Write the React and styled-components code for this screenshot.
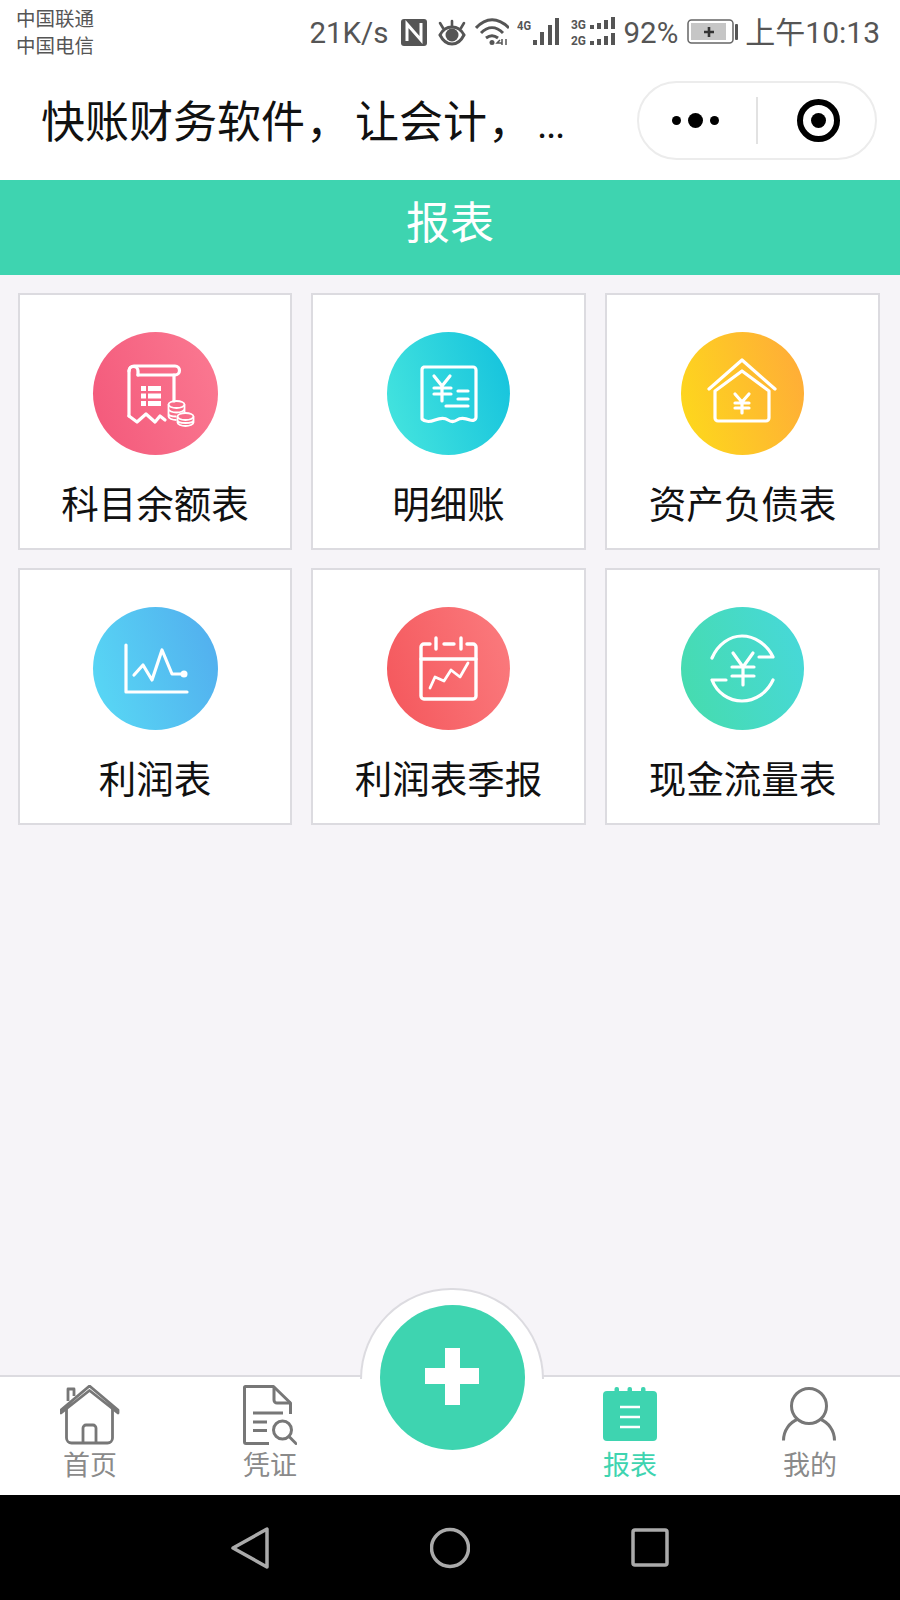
import React from 'react';
import styled, { createGlobalStyle } from 'styled-components';

const TEAL = '#3ed4b0';

const GlobalStyles = createGlobalStyle`
  html, body {
    margin: 0;
    padding: 0;
    background: #000;
  }
  * {
    box-sizing: border-box;
  }
`;

const Page = styled.div`
  width: 900px;
  height: 1600px;
  display: flex;
  flex-direction: column;
  background: #f6f4f8;
  font-family: Roboto, "Noto Sans CJK SC", sans-serif;
  overflow: hidden;
`;

const StatusBar = styled.div`
  height: 60px;
  flex: none;
  background: #fff;
  display: flex;
  justify-content: space-between;
  align-items: center;
  padding: 4px 20px 0 16px;
  color: #555;
`;

const Carriers = styled.div`
  font-size: 19.5px;
  line-height: 27px;
  color: #555;
  margin-top: 2px;
`;

const StatusRight = styled.div`
  display: flex;
  align-items: center;
`;

const StatusText = styled.span`
  font-size: ${props => props.$size || 29.5}px;
  line-height: 34px;
  margin-left: ${props => props.$gap || 0}px;
  margin-top: 2px;
  white-space: nowrap;
`;

const StatusIcon = styled.svg`
  display: block;
  flex: none;
  margin-left: ${props => props.$gap || 0}px;
`;

const NavBar = styled.div`
  height: 120px;
  flex: none;
  background: #fff;
  display: flex;
  justify-content: space-between;
  align-items: center;
  padding: 0 23px 0 41px;
`;

const Title = styled.div`
  font-size: 44px;
  line-height: 60px;
  color: #111;
  white-space: nowrap;
  margin-top: 8px;
`;

const Comma = styled.span`
  margin: 0 5px 0 1px;
`;

const TitleDots = styled.span`
  font-size: 40px;
  letter-spacing: -1.5px;
`;

const Capsule = styled.div`
  width: 240px;
  height: 79px;
  border: 2px solid #ececec;
  border-radius: 40px;
  display: flex;
  align-items: center;
`;

const CapsuleButton = styled.div`
  flex: 1;
  display: flex;
  justify-content: center;
  align-items: center;
  gap: 7px;
  padding: ${props => props.$pad};
`;

const Dot = styled.span`
  width: ${props => props.$size}px;
  height: ${props => props.$size}px;
  border-radius: 50%;
  background: #000;
`;

const CapsuleDivider = styled.div`
  width: 2px;
  height: 47px;
  background: #e2e2e2;
`;

const TargetRing = styled.div`
  width: 43px;
  height: 43px;
  border: 6px solid #000;
  border-radius: 50%;
  display: flex;
  justify-content: center;
  align-items: center;
`;

const Header = styled.div`
  height: 95px;
  flex: none;
  background: ${TEAL};
  color: #fff;
  font-size: 44px;
  line-height: 89px;
  text-align: center;
`;

const Main = styled.div`
  flex: 1;
  padding: 18px 20px 0 18px;
`;

const Grid = styled.div`
  display: grid;
  grid-template-columns: 274px 275px 275px;
  grid-auto-rows: 257px;
  column-gap: 19px;
  row-gap: 18px;
`;

const Card = styled.div`
  background: #fff;
  border: 2px solid #dcdbe0;
  padding-top: 37px;
  display: flex;
  flex-direction: column;
  align-items: center;
`;

const IconCircle = styled.div`
  width: ${props => props.$size}px;
  height: 123px;
  border-radius: 50%;
  background: linear-gradient(72deg, ${props => props.$from}, ${props => props.$to});
  & > svg {
    display: block;
    width: 100%;
    height: 100%;
  }
`;

const CardLabel = styled.div`
  margin-top: 25px;
  font-size: 37.5px;
  line-height: 50px;
  color: #111;
  white-space: nowrap;
`;

const TabBar = styled.div`
  position: relative;
  height: 120px;
  flex: none;
  background: #fff;
  border-top: 2px solid #dcdbe0;
  display: grid;
  grid-template-columns: repeat(5, 180px);
`;

const FabRing = styled.div`
  position: absolute;
  left: 360px;
  top: -89px;
  width: 184px;
  height: 91px;
  background: #fff;
  border: 2px solid #dcdbe0;
  border-bottom: none;
  border-radius: 92px 92px 0 0;
`;

const Fab = styled.div`
  position: absolute;
  left: 380px;
  top: -72px;
  width: 145px;
  height: 145px;
  border-radius: 50%;
  background: ${TEAL};
  &::before, &::after {
    content: '';
    position: absolute;
    background: #fff;
  }
  &::before {
    left: 45px;
    top: 63px;
    width: 54px;
    height: 16px;
  }
  &::after {
    left: 65px;
    top: 43px;
    width: 15px;
    height: 57px;
  }
`;

const Tab = styled.div`
  display: flex;
  flex-direction: column;
  align-items: center;
  padding-top: 8px;
`;

const TabIcon = styled.svg`
  display: block;
  flex: none;
`;

const TabLabel = styled.div`
  margin-top: 5px;
  font-size: 27px;
  line-height: 32px;
  color: ${props => (props.$active ? TEAL : '#8a8a8a')};
`;

const SystemNav = styled.div`
  height: 105px;
  flex: none;
  background: #000;
  display: flex;
  justify-content: center;
  align-items: center;
  gap: 160px;
`;

const stroke = { fill: 'none', stroke: '#fff', strokeWidth: 3.2, strokeLinecap: 'round', strokeLinejoin: 'round' };

function LedgerIcon() {
  return (
    <svg viewBox="0 0 123 123">
      <g {...stroke}>
        <path d="M35 84V39a5 5 0 0 1 5-5h41a4.500 4.500 0 0 1 0 9H44" />
        <path d="M35 39a4.500 4.500 0 0 1 9 0v4" />
        <path d="M80 43v26" />
        <path d="M35 84l8 6 9-8 9 8 5-6 5 4" />
      </g>
      <g fill="#fff">
        <rect x="47" y="54" width="5" height="5" />
        <rect x="54" y="54" width="13" height="5" />
        <rect x="47" y="61.500" width="5" height="5" />
        <rect x="54" y="61.500" width="13" height="5" />
        <rect x="47" y="69" width="5" height="5" />
        <rect x="54" y="69" width="13" height="5" />
      </g>
      <g fill="none" stroke="#fff" strokeWidth="1.800">
        <ellipse cx="82.500" cy="72.500" rx="8" ry="3.500" />
        <path d="M74.500 72.500v12c0 2 4 3.500 8 3.500M74.500 77c0 2 4 3.500 8 3.500s8-1.500 8-3.500M74.500 81.500c0 2 4 3 8 3M90.500 72.500v8" />
        <ellipse cx="91.500" cy="84.500" rx="8" ry="3.500" />
        <path d="M83.500 84.500v6c0 2 4 3.500 8 3.500s8-1.500 8-3.500v-6M83.500 88c0 2 4 3 8 3s8-1 8-3" />
      </g>
    </svg>
  );
}

function ReceiptIcon() {
  return (
    <svg viewBox="0 0 123 123">
      <g {...stroke}>
        <path d="M37 35h49a3 3 0 0 1 3 3v47c0 3-3 4-6 3-5-2-9-3-13 0-3 2-6 2-9 0-4-3-8-2-13 0-5 2-10 2-13-1V38a3 3 0 0 1 2-3z" />
        <path d="M47 44l8 10 8-10M47 56h17M47 62h17M55 54v15" />
        <path d="M71 59h10M71 67h10M59 74h22" />
      </g>
    </svg>
  );
}

function HouseIcon() {
  return (
    <svg viewBox="0 0 123 123">
      <g {...stroke}>
        <path d="M28 57L61 28l33 29" />
        <path d="M34 59l27-20 27 20v27a3 3 0 0 1-3 3H37a3 3 0 0 1-3-3z" />
        <path d="M54 62l7 8 7-8M54 71h14M54 76h14M61 70v11" />
      </g>
    </svg>
  );
}

function ChartIcon() {
  return (
    <svg viewBox="0 0 123 123">
      <g {...stroke}>
        <path d="M32 38v47h61" />
        <path d="M40 68l9-10 9 15 10-30 10 24h12" />
      </g>
      <circle cx="90" cy="67" r="3.500" fill="#fff" />
    </svg>
  );
}

function CalendarIcon() {
  return (
    <svg viewBox="0 0 123 123">
      <g {...stroke} strokeWidth="3.400">
        <path d="M43 37h-6a3 3 0 0 0-3 3v49a3 3 0 0 0 3 3h49a3 3 0 0 0 3-3V40a3 3 0 0 0-3-3h-6" />
        <path d="M49 31v11M74 31v11M57 37h10M34 52h55" />
        <path d="M43 81l5-11 9 4 7-11 9 7 8-14" strokeWidth="2.800" />
      </g>
    </svg>
  );
}

function ExchangeIcon() {
  return (
    <svg viewBox="0 0 123 123">
      <g {...stroke}>
        <path d="M31 51c6-14 18-22 30-22 12 0 25 8 31 21H78" />
        <path d="M92 73c-6 13-18 21-31 21-13 0-25-8-30-21h14" />
        <path d="M52 46l10 14 10-14M51 60h22M51 69h22M62 60v18" />
      </g>
    </svg>
  );
}

const reports = [
  { name: '科目余额表', from: '#f3587a', to: '#fb7a92', size: 125, Icon: LedgerIcon },
  { name: '明细账', from: '#47e6de', to: '#13c1dd', size: 123, Icon: ReceiptIcon },
  { name: '资产负债表', from: '#fddb1a', to: '#ffa93a', size: 123, Icon: HouseIcon },
  { name: '利润表', from: '#58daf5', to: '#52acee', size: 125, Icon: ChartIcon },
  { name: '利润表季报', from: '#f4565b', to: '#fb7c7f', size: 123, Icon: CalendarIcon },
  { name: '现金流量表', from: '#46dcab', to: '#47d8dc', size: 123, Icon: ExchangeIcon },
];

function StatusIcons() {
  return (
    <StatusRight>
      <StatusText>21K/s</StatusText>
      <StatusIcon $gap={12} width="26" height="30" viewBox="402 15 26 30">
        <rect x="402" y="17" width="26" height="27" rx="3" fill="#555" />
        <path d="M408 39V22l14 16V21" fill="none" stroke="#fff" strokeWidth="3" />
      </StatusIcon>
      <StatusIcon $gap={11} width="29" height="30" viewBox="439 15 29 30">
        <path d="M441 33c3-6 7-8 12-8s9 2 12 8c-3 6-7 9-12 9s-9-3-12-9z" fill="none" stroke="#555" strokeWidth="3" />
        <circle cx="453" cy="33" r="6.500" fill="#555" />
        <path d="M441 21l3 5M453 19v5M465 21l-3 5" stroke="#555" strokeWidth="2.600" strokeLinecap="round" />
      </StatusIcon>
      <StatusIcon $gap={8} width="34" height="30" viewBox="476 15 34 30">
        <path d="M477 26c10-11 22-11 33 0M482 31c7-7 15-7 22 0M487 36c4-3 8-3 12 0" fill="none" stroke="#555" strokeWidth="3" />
        <circle cx="493" cy="40.500" r="2.500" fill="#555" />
        <path d="M501 38l-3 3h5M503 37v6M507 37v6" fill="none" stroke="#555" strokeWidth="1.500" />
      </StatusIcon>
      <StatusIcon $gap={8} width="44" height="30" viewBox="518 15 44 30">
        <text x="518" y="28" fontFamily="Roboto" fontSize="13" fontWeight="700" fill="#555" textLength="14" lengthAdjust="spacingAndGlyphs">4G</text>
        <path d="M534 38h4v5h-4zM541 30h4v13h-4zM549 23h4v20h-4zM556 16h4v27h-4z" fill="#555" />
      </StatusIcon>
      <StatusIcon $gap={10} width="46" height="30" viewBox="572 15 46 30">
        <text x="572" y="27" fontFamily="Roboto" fontSize="13" fontWeight="700" fill="#555" textLength="15" lengthAdjust="spacingAndGlyphs">3G</text>
        <text x="572" y="43" fontFamily="Roboto" fontSize="13" fontWeight="700" fill="#555" textLength="15" lengthAdjust="spacingAndGlyphs">2G</text>
        <path d="M591 23h4v4h-4zM598 21h4v6h-4zM605 18h4v9h-4zM612 15h4v12h-4zM591 39h4v4h-4zM598 37h4v6h-4zM605 34h4v9h-4zM612 31h4v12h-4z" fill="#555" />
      </StatusIcon>
      <StatusText $gap={7}>92%</StatusText>
      <StatusIcon $gap={9} width="51" height="30" viewBox="687 15 51 30">
        <rect x="688" y="18" width="45" height="23" rx="3.500" fill="none" stroke="#666" strokeWidth="1.500" />
        <rect x="691" y="21" width="35" height="17" fill="#c6c6c6" />
        <path d="M704 30h10M709 25v10" stroke="#333" strokeWidth="2.600" />
        <rect x="735" y="22" width="3" height="16" rx="1" fill="#555" />
      </StatusIcon>
      <StatusText $gap={7} $size={30}>上午10:13</StatusText>
    </StatusRight>
  );
}

function HomeTabIcon() {
  return (
    <TabIcon width="60" height="60" viewBox="0 0 60 60">
      <g fill="none" stroke="#777" strokeWidth="2.800" strokeLinejoin="round">
        <path d="M1 25L29.500 1 58 25v3L29.500 5.500 1 28z" />
        <path d="M8 16V4h6v7" />
        <path d="M6.500 23v30a5 5 0 0 0 5 5h36a5 5 0 0 0 5-5V23" />
        <path d="M23 58V43a3 3 0 0 1 3-3h7a3 3 0 0 1 3 3v15" />
      </g>
    </TabIcon>
  );
}

function VoucherTabIcon() {
  return (
    <TabIcon width="54" height="60" viewBox="242 1384 54 60">
      <g fill="none" stroke="#777" strokeWidth="3" strokeLinejoin="round">
        <path d="M268 1442.500h-23a1.500 1.500 0 0 1-1.500-1.500v-54.500a1 1 0 0 1 1-1h28l17 16.500v11" />
        <path d="M273 1386v13a3 3 0 0 0 3 3h14" />
        <path d="M252 1412h30M252 1421h14M252 1429.500h14" />
        <circle cx="281.500" cy="1429" r="9" />
        <path d="M288 1435.500l7 7" strokeLinecap="round" />
      </g>
    </TabIcon>
  );
}

function ReportTabIcon() {
  return (
    <TabIcon width="54" height="60" viewBox="603 1385 54 60">
      <rect x="603" y="1391" width="54" height="50" rx="4" fill={TEAL} />
      <rect x="614.500" y="1387" width="4.500" height="8" rx="2" fill={TEAL} />
      <rect x="627.500" y="1387" width="4.500" height="8" rx="2" fill={TEAL} />
      <rect x="641" y="1387" width="4.500" height="8" rx="2" fill={TEAL} />
      <path d="M620 1407h20M620 1417h20M620 1427h20" stroke="#fff" strokeWidth="2.600" />
    </TabIcon>
  );
}

function MineTabIcon() {
  return (
    <TabIcon width="60" height="60" viewBox="780 1384 60 60">
      <g fill="none" stroke="#777" strokeWidth="3">
        <circle cx="809" cy="1405" r="17.500" />
        <path d="M783.500 1439.500c0-10 6-18 14.500-21.500M834.500 1439.500c0-10-6-18-14.500-21.500" />
      </g>
    </TabIcon>
  );
}

export default function App() {
  return (
    <Page>
      <GlobalStyles />
      <StatusBar>
        <Carriers>
          <div>中国联通</div>
          <div>中国电信</div>
        </Carriers>
        <StatusIcons />
      </StatusBar>
      <NavBar>
        <Title>
          快账财务软件<Comma>，</Comma>让会计<Comma>，</Comma><TitleDots>...</TitleDots>
        </Title>
        <Capsule>
          <CapsuleButton $pad="0 4px 0 0">
            <Dot $size={9} />
            <Dot $size={15} />
            <Dot $size={9} />
          </CapsuleButton>
          <CapsuleDivider />
          <CapsuleButton $pad="0 0 0 4px">
            <TargetRing>
              <Dot $size={15} />
            </TargetRing>
          </CapsuleButton>
        </Capsule>
      </NavBar>
      <Header>报表</Header>
      <Main>
        <Grid>
          {reports.map(({ name, from, to, size, Icon }) => (
            <Card key={name}>
              <IconCircle $from={from} $to={to} $size={size}>
                <Icon />
              </IconCircle>
              <CardLabel>{name}</CardLabel>
            </Card>
          ))}
        </Grid>
      </Main>
      <TabBar>
        <FabRing />
        <Fab />
        <Tab>
          <HomeTabIcon />
          <TabLabel>首页</TabLabel>
        </Tab>
        <Tab>
          <VoucherTabIcon />
          <TabLabel>凭证</TabLabel>
        </Tab>
        <Tab />
        <Tab>
          <ReportTabIcon />
          <TabLabel $active>报表</TabLabel>
        </Tab>
        <Tab>
          <MineTabIcon />
          <TabLabel>我的</TabLabel>
        </Tab>
      </TabBar>
      <SystemNav>
        <svg width="40" height="44" viewBox="0 0 40 44">
          <path d="M3 22L37 3v38z" fill="none" stroke="#aaa" strokeWidth="3.500" strokeLinejoin="round" />
        </svg>
        <svg width="40" height="44" viewBox="0 0 40 44">
          <circle cx="20" cy="22" r="18.500" fill="none" stroke="#aaa" strokeWidth="3.500" />
        </svg>
        <svg width="40" height="44" viewBox="0 0 40 44">
          <rect x="3" y="4" width="34" height="35" rx="2" fill="none" stroke="#aaa" strokeWidth="3.500" />
        </svg>
      </SystemNav>
    </Page>
  );
}
